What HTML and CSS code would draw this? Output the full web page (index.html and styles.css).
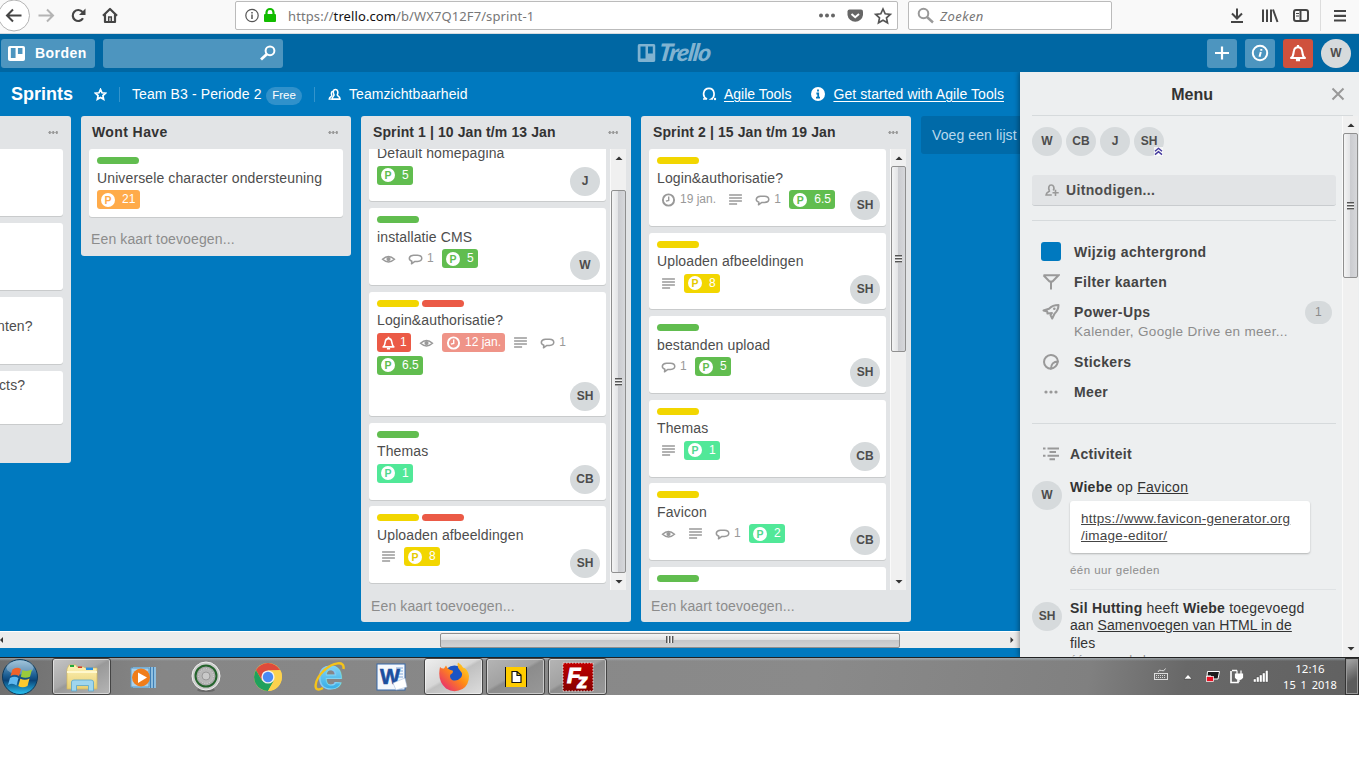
FILE: index.html
```html
<!DOCTYPE html>
<html lang="nl">
<head>
<meta charset="utf-8">
<title>Sprints | Trello</title>
<link rel="stylesheet" href="styles.css">
</head>
<body>
<svg class="defs" width="0" height="0" aria-hidden="true">
  <defs>
    <symbol id="eye" viewBox="0 0 14 14"><path d="M1 7.2Q7 1.6 13 7.2Q7 12.6 1 7.2Z" fill="none" stroke="currentColor" stroke-width="1.4"/><circle cx="7" cy="7.1" r="2.1" fill="currentColor"/></symbol>
    <symbol id="comment" viewBox="0 0 14 14"><path d="M3 11.8L3.400 9.200C-.3 8.200-.2 3.600 5 3.200H9C14.600 3.400 14.800 9.200 9 9.400H6.400Z" fill="none" stroke="currentColor" stroke-width="1.500" stroke-linejoin="round"/></symbol>
    <symbol id="desc" viewBox="0 0 14 14"><path d="M.6 2H13.4M.6 5H13.4M.6 8H13.4M.6 11H8.6" stroke="currentColor" stroke-width="1.700"/></symbol>
    <symbol id="clock" viewBox="0 0 14 14"><circle cx="7" cy="7" r="5.6" fill="none" stroke="currentColor" stroke-width="1.9"/><path d="M7.2 3.6V7.4L4.4 8.2" fill="none" stroke="currentColor" stroke-width="1.4"/></symbol>
    <symbol id="bell" viewBox="0 0 14 14"><path d="M1.6 10.9C3.6 9.8 3.3 7.6 3.8 5.4C4.2 3.4 5.3 2.6 7 2.6S9.800 3.400 10.200 5.400C10.700 7.600 10.400 9.800 12.400 10.900Z" fill="none" stroke="currentColor" stroke-width="1.6" stroke-linejoin="round"/><path d="M7 .8V2.500M5.400 12.600H8.600" stroke="currentColor" stroke-width="1.700"/></symbol>
    <symbol id="person" viewBox="0 0 14 14"><path d="M6.500 7.400C5 4.900 5.500 1.700 8 1.700S11.300 4.900 10 7.400C10 9 12.800 8.800 12.900 12H4.400C4.500 9 6.600 9 6.500 7.400Z" fill="none" stroke="currentColor" stroke-width="1.700"/><path d="M5.500 3.500C2.800 4 3.500 6.500 4.200 8C4 9.500 1.500 9 1.300 12H4" fill="none" stroke="currentColor" stroke-width="1.500"/></symbol>
    <symbol id="up" viewBox="0 0 10 6"><path d="M1.500 5L5 1.500L8.500 5Z" fill="#333"/></symbol>
    <symbol id="down" viewBox="0 0 10 6"><path d="M1.500 1L5 4.500L8.500 1Z" fill="#333"/></symbol>
    <symbol id="boards" viewBox="0 0 18 18"><path fill-rule="evenodd" fill="currentColor" d="M2 0H16Q18 0 18 2V16Q18 18 16 18H2Q0 18 0 16V2Q0 0 2 0ZM3 2.500V14.500H8V2.500ZM10.500 2.500V9.500H15.300V2.500Z"/></symbol>
    <linearGradient id="orb" x1="0" y1="0" x2="0" y2="1"><stop offset="0" stop-color="#7fb0cf"/><stop offset=".45" stop-color="#1d5f94"/><stop offset=".6" stop-color="#0b4478"/><stop offset="1" stop-color="#29c4f4"/></linearGradient>
    <linearGradient id="folder" x1="0" y1="0" x2="0" y2="1"><stop offset="0" stop-color="#fdf3b8"/><stop offset="1" stop-color="#e8cf73"/></linearGradient>
    <linearGradient id="fox" x1="1" y1="0" x2="0" y2="1"><stop offset="0" stop-color="#ffe226"/><stop offset=".45" stop-color="#ff8a16"/><stop offset="1" stop-color="#e31587"/></linearGradient>
    <linearGradient id="ie" x1="0" y1="0" x2="0" y2="1"><stop offset="0" stop-color="#b5ecff"/><stop offset="1" stop-color="#1a9fe0"/></linearGradient>
    <linearGradient id="red" x1="0" y1="0" x2="0" y2="1"><stop offset="0" stop-color="#c00000"/><stop offset="1" stop-color="#850000"/></linearGradient>
  </defs>
</svg>

<div class="screen">
  <div class="browser">
    <div class="nav">
      <svg class="nav-icons" width="125" height="34" viewBox="0 0 125 34">
        <circle cx="14" cy="15.500" r="15.500" fill="#fff" stroke="#b5b5b5"/>
        <path d="M21.500 15.500H7.500M13 9.500L7 15.500L13 21.500" fill="none" stroke="#454545" stroke-width="2"/>
        <path d="M38.500 15.500H52M47 9.500L53 15.500L47 21.500" fill="none" stroke="#b4b4b4" stroke-width="2"/>
        <path d="M83 18.300A5.500 5.500 0 1 1 82.500 12" fill="none" stroke="#454545" stroke-width="2.200"/><path d="M85.500 8.500V15H79Z" fill="#454545"/>
        <path d="M103 15.800L110 9L117 15.800M105 14V22H115V14" fill="none" stroke="#454545" stroke-width="2.200" stroke-linejoin="round"/><path d="M108.700 22V17H111.300V22" stroke="#454545" stroke-width="1.500" fill="none"/>
      </svg>
    </div>
    <div class="urlbar">
      <svg width="34" height="20" viewBox="0 0 34 20"><circle cx="8" cy="9.500" r="6.200" fill="none" stroke="#555" stroke-width="1.200"/><path d="M8 6V7.400M8 8.600V13" stroke="#555" stroke-width="1.500"/><rect x="20" y="8" width="12" height="8" rx="1" fill="#12bc00"/><path d="M22.500 9V6.500A3.500 3.500 0 0 1 29.500 6.500V9" fill="none" stroke="#12bc00" stroke-width="2.200"/></svg>
      <span class="url">https://<b>trello.com</b>/b/WX7Q12F7/sprint-1</span>
      <svg class="url-actions" width="80" height="24" viewBox="0 0 80 24"><g fill="#666"><circle cx="4" cy="11.500" r="2"/><circle cx="10" cy="11.500" r="2"/><circle cx="16" cy="11.500" r="2"/><path d="M32.500 5.500H44Q46 5.500 46 7.500V11A7.800 7.500 0 0 1 30.500 11V7.500Q30.500 5.500 32.500 5.500Z"/></g><path d="M34.500 10L38.200 13.200L42 10" fill="none" stroke="#fff" stroke-width="2"/><path d="M66 5L68.200 9.800L73.300 10.300L69.500 13.800L70.500 18.800L66 16.300L61.500 18.800L62.500 13.800L58.700 10.300L63.800 9.800Z" fill="none" stroke="#555" stroke-width="1.700"/></svg>
    </div>
    <div class="searchbar">
      <svg width="18" height="18" viewBox="0 0 18 18"><circle cx="6.500" cy="6.500" r="4.800" fill="none" stroke="#999" stroke-width="2"/><path d="M10 10L16 15.500" stroke="#999" stroke-width="2.400"/></svg>
      <span>Zoeken</span>
    </div>
    <svg class="tools" width="130" height="31" viewBox="0 0 130 31"><g fill="none" stroke="#454545" stroke-width="2"><path d="M8 8.500V18.500M3 13.500L8 18.500L13 13.500M2 22H14"/><path d="M34 9.500V22M38 9.500V22M42 9.500V22M44 9.500L48.500 22"/><rect x="65" y="10" width="14" height="11" rx="2"/><path d="M71.500 10V21"/><path d="M67 13.500H70M67 16H70" stroke-width="1"/><path d="M105 11H117M105 15.800H117M105 20.500H117" stroke-width="2.200"/></g><path d="M91.500 0V31" stroke="#ddd"/></svg>
  </div>

  <div class="topbar">
    <div class="btn boards"><svg width="17" height="15" preserveAspectRatio="none" viewBox="0 0 18 18"><use href="#boards"/></svg><span>Borden</span></div>
    <div class="btn find"><svg width="18" height="16" viewBox="0 0 18 16"><circle cx="11" cy="5.800" r="4.400" fill="none" stroke="#fff" stroke-width="2"/><path d="M8 9L2 14.500" stroke="#fff" stroke-width="2.800"/></svg></div>
    <div class="logo"><svg width="19" height="18" viewBox="0 0 18 18"><use href="#boards"/></svg><span>Trello</span></div>
    <div class="actions">
      <div class="btn sq"><svg width="16" height="16" viewBox="0 0 16 16"><path d="M8 1.500V14.500M1 8H15" stroke="#fff" stroke-width="2.200"/></svg></div>
      <div class="btn sq"><svg width="18" height="18" viewBox="0 0 18 18"><circle cx="9" cy="9" r="7.200" fill="none" stroke="#fff" stroke-width="2"/><path d="M10.300 5V6.800M9.800 8L8.500 12.800" stroke="#fff" stroke-width="2"/></svg></div>
      <div class="btn sq alert"><svg width="18" height="18"><use href="#bell"/></svg></div>
      <div class="avatar top">W</div>
    </div>
  </div>

  <div class="app">
    <div class="board">
      <div class="board-head">
        <h1>Sprints</h1>
        <svg class="star" width="13" height="13" viewBox="0 0 14 14"><path d="M7 1.500L8.600 5.100L12.500 5.500L9.600 8.200L10.400 12.200L7 10.200L3.600 12.200L4.400 8.200L1.500 5.500L5.400 5.100Z" fill="none" stroke="#fff" stroke-width="1.800"/></svg>
        <span class="team">Team B3 - Periode 2</span><span class="free">Free</span>
        <span class="vis"><svg width="13" height="13"><use href="#person"/></svg>Teamzichtbaarheid</span>
        <span class="right">
          <svg width="15" height="14" viewBox="0 0 15 14"><path d="M1 12H5C-.5 9.500 1.200 1.400 7 1.400S13.500 9.500 9.500 12H11" fill="none" stroke="#fff" stroke-width="1.700"/><circle cx="13" cy="12" r="1.200" fill="#fff"/></svg>
          <u class="agile">Agile Tools</u>
          <svg width="14" height="14" viewBox="0 0 14 14"><circle cx="7" cy="7" r="7" fill="#fff"/><path d="M7 2.500V4.600M5.400 6.500H7.200V10.500M5 10.600H9" stroke="#0079bf" stroke-width="1.800" fill="none"/></svg>
          <u class="start">Get started with Agile Tools</u>
        </span>
      </div>

      <div class="lists">
        <section class="list cut">
          <header><h2></h2><i class="dots"></i></header>
          <div class="card h68"></div>
          <div class="card h68"></div>
          <div class="card h68"><p class="frag low">nten?</p></div>
          <div class="card h53"><p class="frag">cts?</p></div>
        </section>

        <section class="list short">
          <header><h2 class="wide">Wont Have</h2><i class="dots"></i></header>
          <div class="card h68 full">
            <div class="labels"><i class="green"></i></div>
            <p>Universele character ondersteuning</p>
            <div class="badges"><span class="pill orange"><b>P</b>21</span></div>
          </div>
          <footer>Een kaart toevoegen...</footer>
        </section>

        <section class="list">
          <header><h2>Sprint 1 | 10 Jan t/m 13 Jan</h2><i class="dots"></i></header>
          <div class="body">
            <div class="cards scrolled">
              <div class="card">
                <div class="labels"><i class="green"></i></div>
                <p>Default homepagina</p>
                <div class="badges"><span class="pill green"><b>P</b>5</span></div>
                <div class="avatar">J</div>
              </div>
              <div class="card">
                <div class="labels"><i class="green"></i></div>
                <p>installatie CMS</p>
                <div class="badges"><span class="plain solo"><svg><use href="#eye"/></svg></span><span class="plain"><svg><use href="#comment"/></svg>1</span><span class="pill green"><b>P</b>5</span></div>
                <div class="avatar">W</div>
              </div>
              <div class="card tall">
                <div class="labels"><i class="yellow"></i><i class="red"></i></div>
                <p>Login&amp;authorisatie?</p>
                <div class="badges"><span class="plain red"><svg><use href="#bell"/></svg>1</span><span class="plain solo"><svg><use href="#eye"/></svg></span><span class="plain due"><svg><use href="#clock"/></svg>12 jan.</span><span class="plain solo"><svg><use href="#desc"/></svg></span><span class="plain"><svg><use href="#comment"/></svg>1</span><span class="pill green"><b>P</b>6.5</span></div>
                <div class="avatar">SH</div>
              </div>
              <div class="card">
                <div class="labels"><i class="green"></i></div>
                <p>Themas</p>
                <div class="badges"><span class="pill mint"><b>P</b>1</span></div>
                <div class="avatar">CB</div>
              </div>
              <div class="card">
                <div class="labels"><i class="yellow"></i><i class="red"></i></div>
                <p>Uploaden afbeeldingen</p>
                <div class="badges"><span class="plain solo"><svg><use href="#desc"/></svg></span><span class="pill yellow"><b>P</b>8</span></div>
                <div class="avatar">SH</div>
              </div>
            </div>
            <div class="vbar"><svg><use href="#up"/></svg><div class="thumb t1"><i></i></div><svg><use href="#down"/></svg></div>
          </div>
          <footer>Een kaart toevoegen...</footer>
        </section>

        <section class="list">
          <header><h2>Sprint 2 | 15 Jan t/m 19 Jan</h2><i class="dots"></i></header>
          <div class="body">
            <div class="cards">
              <div class="card">
                <div class="labels"><i class="yellow"></i></div>
                <p>Login&amp;authorisatie?</p>
                <div class="badges"><span class="plain"><svg><use href="#clock"/></svg>19 jan.</span><span class="plain solo"><svg><use href="#desc"/></svg></span><span class="plain"><svg><use href="#comment"/></svg>1</span><span class="pill green"><b>P</b>6.5</span></div>
                <div class="avatar">SH</div>
              </div>
              <div class="card">
                <div class="labels"><i class="yellow"></i></div>
                <p>Uploaden afbeeldingen</p>
                <div class="badges"><span class="plain solo"><svg><use href="#desc"/></svg></span><span class="pill yellow"><b>P</b>8</span></div>
                <div class="avatar">SH</div>
              </div>
              <div class="card">
                <div class="labels"><i class="green"></i></div>
                <p>bestanden upload</p>
                <div class="badges"><span class="plain"><svg><use href="#comment"/></svg>1</span><span class="pill green"><b>P</b>5</span></div>
                <div class="avatar">SH</div>
              </div>
              <div class="card">
                <div class="labels"><i class="yellow"></i></div>
                <p>Themas</p>
                <div class="badges"><span class="plain solo"><svg><use href="#desc"/></svg></span><span class="pill mint"><b>P</b>1</span></div>
                <div class="avatar">CB</div>
              </div>
              <div class="card">
                <div class="labels"><i class="yellow"></i></div>
                <p>Favicon</p>
                <div class="badges"><span class="plain solo"><svg><use href="#eye"/></svg></span><span class="plain solo"><svg><use href="#desc"/></svg></span><span class="plain"><svg><use href="#comment"/></svg>1</span><span class="pill mint"><b>P</b>2</span></div>
                <div class="avatar">CB</div>
              </div>
              <div class="card">
                <div class="labels"><i class="green"></i></div>
              </div>
            </div>
            <div class="vbar"><svg><use href="#up"/></svg><div class="thumb t2"><i></i></div><svg><use href="#down"/></svg></div>
          </div>
          <footer>Een kaart toevoegen...</footer>
        </section>

        <div class="add-list">Voeg een lijst</div>
      </div>

      <div class="hbar">
        <svg width="4" height="8" viewBox="0 0 4 8"><path d="M3 1V7L0 4Z" fill="#333"/></svg>
        <div class="hthumb"><i></i></div>
        <svg width="4" height="8" viewBox="0 0 4 8"><path d="M.5 1V7L3.500 4Z" fill="#333"/></svg>
      </div>
    </div>

    <aside class="menu">
      <div class="menu-head"><h3>Menu</h3><svg width="14" height="14" viewBox="0 0 14 14"><path d="M1.500 1.500L12.500 12.500M12.500 1.500L1.500 12.500" stroke="#999" stroke-width="2"/></svg></div>
      <div class="menu-body">
        <div class="menu-content">
          <div class="members">
            <div class="avatar">W</div><div class="avatar">CB</div><div class="avatar">J</div>
            <div class="avatar">SH<svg class="admin" width="9" height="9" viewBox="0 0 9 9"><rect width="9" height="9" fill="#fff" opacity=".7"/><path d="M1 4.300L4.500 1.300L8 4.300M1 7.600L4.500 4.600L8 7.600" fill="none" stroke="#42389d" stroke-width="1.400"/></svg></div>
          </div>
          <div class="invite"><svg width="14" height="14" viewBox="0 0 14 14"><path d="M4.500 8C2.900 5 3.800 2 6.200 2S9.800 5 8.300 7.500M4.500 8C4.500 9 1.300 8.800 1.100 12H6.800" fill="none" stroke="#999" stroke-width="1.700"/><path d="M10.500 6.800V13M7.500 9.800H13.700" stroke="#999" stroke-width="1.600"/></svg>Uitnodigen...</div>
          <ul class="items">
            <li><i class="swatch"></i>Wijzig achtergrond</li>
            <li><svg width="18" height="16" viewBox="0 0 18 16"><path d="M1.500 1.300H16.500L10.500 7.500H7.500L1.500 1.300M9 7V15.500" fill="none" stroke="#999" stroke-width="2"/></svg>Filter kaarten</li>
            <li><svg width="18" height="16" viewBox="0 0 18 16"><path d="M1.500 6.500L7 4.700C10 1.600 12.500 1 16.500 1C16.500 4.500 15.500 7 12.500 9.700L10.200 14.500L8.500 11L10 9L5.500 9.500L5.200 7.500Z" fill="none" stroke="#999" stroke-width="2" stroke-linejoin="round"/><circle cx="12.300" cy="4.800" r="1.300" fill="#999"/></svg>Power-Ups<em>1</em></li>
            <li class="sub">Kalender, Google Drive en meer...</li>
            <li class="stick"><svg width="18" height="16" viewBox="0 0 18 16"><path d="M9 14.700A7 6.800 0 1 1 16 7.500Q14.500 13.800 9 14.700C9 10.500 11.500 7.500 16 7.500" fill="none" stroke="#999" stroke-width="2"/></svg>Stickers</li>
            <li><svg width="18" height="16" viewBox="0 0 18 16"><g fill="#999"><circle cx="4" cy="8" r="1.600"/><circle cx="9" cy="8" r="1.600"/><circle cx="14" cy="8" r="1.600"/></g></svg>Meer</li>
          </ul>
          <h4><svg width="18" height="16" viewBox="0 0 18 16"><path d="M5.500 2.500H17M7.500 6H14M5.500 9.700H17M7.500 13.300H13M1 2.500H3.500M1 9.700H3.500" stroke="#999" stroke-width="2"/></svg>Activiteit</h4>
          <div class="entry first">
            <div class="avatar">W</div>
            <div class="what">
              <div class="line op"><b>Wiebe</b> op <u>Favicon</u></div>
              <div class="bubble"><u>https://www.favicon-generator.org<br>/image-editor/</u></div>
              <div class="time">één uur geleden</div>
            </div>
          </div>
          <div class="entry second">
            <div class="avatar">SH</div>
            <div class="what">
              <div class="line"><span class="sil"><b>Sil Hutting</b> heeft <b>Wiebe</b> toegevoegd</span><br>aan <u>Samenvoegen van HTML in de</u><br>files</div>
              <div class="time">één uur geleden</div>
            </div>
          </div>
        </div>
        <div class="vbar"><svg><use href="#up"/></svg><div class="thumb t3"><i></i></div><svg><use href="#down"/></svg></div>
      </div>
    </aside>
  </div>

  <div class="taskbar">
    <div class="orb"><svg width="40" height="38" viewBox="0 0 40 38"><circle cx="20" cy="19" r="17.500" fill="url(#orb)" stroke="#0d3a5c"/><ellipse cx="20" cy="9.500" rx="13.500" ry="7" fill="#fff" opacity=".28"/><path d="M12.500 11.500Q16.500 8.500 21 11L19 18Q15 15.500 10.500 18Z" fill="#f0622a"/><path d="M22.500 12Q27 14.200 32 11.500L30 18.700Q25.500 21 20.800 18.700Z" fill="#9acb3b"/><path d="M10 20Q14.500 17.500 18.500 20L16.500 27.500Q12.500 24.500 8 27Z" fill="#5fb8ef"/><path d="M20.300 20.700Q25 23 29.500 20.600L27.500 28Q22.500 30.500 18.300 28Z" fill="#fdc92e"/></svg></div>
    <div class="task open light"><svg width="34" height="30" viewBox="0 0 34 30"><path d="M2 7L4 3H11L12 5H19L20 6H32V27H2Z" fill="url(#folder)" stroke="#d5b95c" stroke-width=".7"/><path d="M5 3H9V5H5Z" fill="#20a83a"/><path d="M13 4.500H17V6H13Z" fill="#d43a2a"/><path d="M21 5.500H28V8H21Z" fill="#2a8fe0"/><path d="M2 10H32" stroke="#fff8cd" stroke-width="2"/><path d="M6.500 29V20Q6.500 18 9 18H26Q28.500 18 28.500 20V29H23.500V23.500H11.500V29Z" fill="#9fd6ee" stroke="#5ba6ca" stroke-width=".8"/></svg></div>
    <div class="task"><svg width="30" height="26" viewBox="0 0 30 26"><path d="M4 3H27V24H4Z" fill="#8fbfe0"/><path d="M21.500 3V24M24.500 3V24" stroke="#3f7fb5"/><path d="M2 4H20V23H2Z" fill="#acd1ea" stroke="#5d9dca"/><circle cx="12" cy="13.500" r="9" fill="#f07d1a"/><path d="M9 8.500L18 13.500L9 19Z" fill="#fff"/></svg></div>
    <div class="task"><svg width="32" height="32" viewBox="0 0 32 32"><ellipse cx="16" cy="29" rx="9" ry="2" fill="#555" opacity=".6"/><circle cx="16" cy="15" r="14" fill="#ccc" stroke="#eee"/><circle cx="16" cy="15" r="10.500" fill="#a9a9a9" stroke="#25642d" stroke-width="2"/><circle cx="16" cy="15" r="7.500" fill="#b7b7b7" stroke="#ddd" stroke-dasharray="1 1.500"/><circle cx="16" cy="15" r="4" fill="#c9c9c9" stroke="#999"/></svg></div>
    <div class="task"><svg width="30" height="28" viewBox="0 0 30 28"><circle cx="15" cy="14" r="14" fill="#fdd24d"/><path d="M2.900 7A14 14 0 0 1 27.100 7L15 7.500L9 17.500Z" fill="#de4b3c"/><path d="M2.900 7A14 14 0 0 0 15 28L21 17.500H9Z" fill="#1fa15d"/><path d="M15 7.500H27.500Q30.500 14 27 21Q22.500 28 15 28L21 17.500Z" fill="#fdd24d"/><circle cx="15" cy="14" r="6.600" fill="#f1f1f1"/><circle cx="15" cy="14" r="5.200" fill="#4a8af4"/></svg></div>
    <div class="task"><svg width="34" height="32" viewBox="0 0 34 32"><text x="5" y="28" font-family="Liberation Sans" font-weight="bold" font-size="43" fill="url(#ie)" stroke="#7fd4f5" stroke-width="1" textLength="25" lengthAdjust="spacingAndGlyphs">e</text><path d="M10 27C-1 33 1 19 11 9.500C20 1.500 32 -1 30.500 8" fill="none" stroke="#f5c31a" stroke-width="2.400"/></svg></div>
    <div class="task"><svg width="32" height="30" viewBox="0 0 32 30"><rect x="1" y="2" width="28" height="26" fill="#f4f8fd" stroke="#3769aa"/><path d="M20 6H27M22 9H27M22 12H27M22 15H27" stroke="#80a6d8"/><text x="4" y="22" font-family="Liberation Sans" font-weight="bold" font-size="22" fill="#1c4f9f" stroke="#1c4f9f" stroke-width=".6" textLength="20" lengthAdjust="spacingAndGlyphs">W</text><path d="M17 21L29 16L31 25L20 28Z" fill="#fff" stroke="#9cb5d6" stroke-width=".5"/></svg></div>
    <div class="task open bright"><svg width="32" height="30" viewBox="0 0 32 30"><circle cx="16.500" cy="14" r="10.500" fill="#1a54c4"/><path d="M2 5Q4 7 6 6.500L8 3.500Q10 8 14.500 8.500Q16 10.500 12.500 12.500Q11 15.500 14 18Q19 20 23 15.500Q25.500 12 22 8.500Q18.500 5 20 .5Q24 3 25 5.500Q30 7 31 14Q31 23 24.500 27Q16 31.500 8 26.500Q-1 19 2 5Z" fill="url(#fox)"/></svg></div>
    <div class="task open"><svg width="22" height="20" viewBox="0 0 22 20"><rect width="22" height="20" fill="#fc0"/><path d="M.5 0V20M21.500 0V20" stroke="#111"/><path d="M7 4.500H12L16 8V15.500H7ZM12 4.500V8.500H16" fill="#fff" stroke="#111" stroke-width="1.200"/></svg></div>
    <div class="task open"><svg width="32" height="30" viewBox="0 0 32 30"><rect x="1" y="1" width="30" height="28" fill="url(#red)" stroke="#f2d0d0" stroke-width="1" stroke-dasharray="1.500 1.500"/><text x="5" y="21" font-family="Liberation Sans" font-style="italic" font-weight="bold" font-size="22" fill="#fff" stroke="#fff">F</text><text x="15" y="26" font-family="Liberation Sans" font-style="italic" font-weight="bold" font-size="21" fill="#fff" stroke="#fff">z</text></svg></div>
    <svg class="tray" width="124" height="24" viewBox="0 0 124 24">
      <g stroke="#ddd" fill="none"><rect x="2.500" y="8.500" width="13" height="6"/><path d="M4 10.500H14M4 12.500H14" stroke-dasharray="1 1"/><path d="M6 7Q7 4 9.500 5.500T13.500 3.500"/></g>
      <path d="M32 14L36 9.500L40 14Z" fill="#fff" stroke="#333" stroke-width=".5"/>
      <path d="M55.500 6.500H67.500L66 14H59V11H55Z" fill="#1c1c1c" stroke="#fff"/><rect x="54.500" y="11.500" width="7" height="5" fill="#e81123" stroke="#fff" stroke-width=".7"/>
      <path d="M80 5.500H85M79 6V17.500H86V15" fill="none" stroke="#fff" stroke-width="1.600"/><path d="M83.500 9H90.500V12.500Q87 16.500 83.500 12.500ZM85 9V5.500M89 9V5.500M87 14V17" fill="#fff" stroke="#fff" stroke-width="1.200"/>
      <g fill="#fff" stroke="#333" stroke-width=".3"><rect x="101.500" y="14" width="2.500" height="3"/><rect x="104.500" y="12" width="2.500" height="5"/><rect x="107.500" y="10" width="2.500" height="7"/><rect x="110.500" y="8" width="2.500" height="9"/><rect x="113.500" y="5.500" width="2.500" height="11.500"/></g>
    </svg>
    <div class="when"><span>12:16</span><span class="date">15 1 2018</span></div>
    <div class="peek"></div>
  </div>
</div>
</body>
</html>
```
FILE: styles.css
```css
* { box-sizing: border-box; }
body { margin: 0; background: #fff; font: 14px "Liberation Sans", Arial, sans-serif; color: #4d4d4d; overflow: hidden; }
h1, h2, h3, h4, p, ul { margin: 0; padding: 0; }
svg { display: block; flex: none; }
.defs { position: absolute; }
.screen { width: 1359px; height: 695px; display: flex; flex-direction: column; overflow: hidden; }

/* Browser toolbar */
.browser { flex: none; height: 34px; background: #f9f9f9; border-bottom: 1px solid #d5dbdf; display: flex; align-items: flex-start; overflow: hidden; }
.nav { width: 235px; }
.urlbar { width: 663px; height: 29px; margin-top: 1px; border: 1px solid #bbb; border-radius: 2px; background: #fff; display: flex; align-items: center; padding-left: 8px; }
.url { margin-left: 10px; flex: 1; font: 13px "Noto Sans", sans-serif; color: #777; letter-spacing: .1px; white-space: nowrap; }
.url b { font-weight: 400; color: #111; }
.searchbar { width: 204px; height: 29px; margin: 1px 0 0 10px; border: 1px solid #bbb; border-radius: 2px; background: #fff; display: flex; align-items: center; padding-left: 8px; gap: 5px; font: italic 13px "Noto Sans", sans-serif; letter-spacing: .5px; color: #777; }
.tools { margin-left: 117px; }

/* Trello header */
.topbar { flex: none; height: 38px; background: #0067a3; display: flex; align-items: center; padding-left: 1px; }
.btn { height: 29px; border-radius: 3px; background: #4d95bf; color: #fff; display: flex; align-items: center; }
.boards { width: 94px; padding-left: 7px; gap: 10px; font-weight: 700; letter-spacing: .45px; }
.find { width: 180px; margin-left: 8px; justify-content: flex-end; padding-right: 6px; }
.logo { margin-left: 354px; width: 80px; height: 22px; display: flex; align-items: center; gap: 3px; color: #80b3d1; }
.logo span { font: italic 900 24px/22px Lato, sans-serif; letter-spacing: -1px; transform: scaleX(1.03) skewX(-8deg); transform-origin: left; margin-top: -2px; }
.actions { margin-left: auto; display: flex; gap: 8px; padding-right: 8px; }
.sq { width: 30px; justify-content: center; }
.alert { background: #cf513d; }
.avatar { width: 30px; height: 29px; border-radius: 50%; background: #d6dadc; color: #4d4d4d; font-weight: 700; font-size: 12px; line-height: 29px; text-align: center; flex: none; }

.app { flex: 1; display: flex; min-height: 0; }
.board { width: 1020px; background: #0079bf; display: flex; flex-direction: column; overflow: hidden; }
.board-head { height: 44px; flex: none; display: flex; align-items: center; padding: 0 16px 0 11px; color: #fff; white-space: nowrap; }
.board-head h1 { font-size: 18px; width: 83px; padding-top: 1px; }
.team { margin-left: 12px; border-left: 1px solid #3394cc; padding-left: 12px; line-height: 15px; width: 148px; letter-spacing: .1px; }
.star { margin-top: 1px; }
.free { width: 36px; height: 18px; margin-top: 3px; margin-left: -1px; border-radius: 9px; background: #3091cb; font-size: 11.5px; line-height: 17px; text-align: center; }
.vis { display: flex; align-items: center; gap: 8px; margin-left: 12px; border-left: 1px solid #3394cc; padding-left: 13px; height: 15px; letter-spacing: .06px; }
.right { margin-left: auto; display: flex; align-items: center; }
.right u { margin-left: 7px; text-underline-offset: 2px; }
.agile { margin-right: 20px; }
.start { letter-spacing: .07px; }
.right u.start { margin-left: 8px; }

/* Lists */
.lists { height: 515px; flex: none; display: flex; align-items: flex-start; gap: 10px; }
.list { width: 270px; height: 506px; flex: none; border-radius: 3px; background: #e2e4e6; overflow: hidden; }
.list header { height: 33px; display: flex; align-items: center; padding: 0 13px 0 12px; justify-content: space-between; }
.list h2 { font-size: 14px; color: #333; letter-spacing: .1px; white-space: nowrap; margin-top: -2px; }
.list h2.wide { letter-spacing: .4px; margin-left: -1px; }
.dots { width: 10px; background: radial-gradient(circle, #999 1.200px, transparent 1.600px) 0 0 / 3.500px 3px; height: 3px; }
.list.cut { width: 71px; height: 347px; border-radius: 0 3px 3px 0; }
.list.short { height: 140px; }
.card { position: relative; height: 76.800px; margin: 0 0 6.800px; padding: 8px; border-radius: 3px; background: #fff; box-shadow: 0 1px 0 #c9cbcc; width: 237px; }
.card.h68 { height: 67.200px; width: auto; }
.card.full { margin: 0 8px; height: 68px; }
.card.h53 { height: 53px; width: auto; }
.cut .card { margin-right: 8px; padding: 5px 0; border-radius: 0 3px 3px 0; }
.card.tall { height: 124.200px; }
.card p { font-size: 14px; line-height: 18px; letter-spacing: .12px; white-space: nowrap; }
.card p.frag { margin-left: -1px; }
.card p.low { padding-top: 15px; margin-left: -3px; }
.labels { display: flex; gap: 3px; height: 7px; margin-bottom: 4.500px; }
.labels i { width: 42px; border-radius: 4px; }
.green { background: #61bd4f; }
.yellow { background: #f2d600; }
.red { background: #eb5a46; }
.orange { background: #ffab4a; }
.mint { background: #51e898; }
.badges { display: flex; flex-wrap: wrap; gap: 4px; margin-top: 3.500px; width: 221px; font-size: 12px; line-height: 19px; }
.badges span { height: 19px; padding-right: 4.300px; border-radius: 3px; display: flex; align-items: center; white-space: nowrap; }
.plain { color: #999; }
.plain svg { width: 23px; height: 14px; margin-top: 1px; }
.badges .solo { width: 23px; padding: 0; }
.badges .plain.red, .badges .due { color: #fff; }
.due { background: #ef9488; }
.pill { color: #fff; }
.pill b { width: 14px; height: 14px; margin: 0 7px 0 4px; border-radius: 50%; background: #fff; font-size: 10.500px; line-height: 14px; text-align: center; }
.pill.green b { color: #61bd4f; }
.pill.orange b { color: #ffab4a; }
.pill.mint b { color: #51d890; }
.pill.yellow b { color: #e5ca00; }
.card .avatar { position: absolute; right: 6px; bottom: 5.500px; }
.list footer { height: 32px; padding-left: 10px; line-height: 33px; color: #8c8c8c; letter-spacing: .13px; }
.short footer { margin-top: 6px; }
.body { height: 441px; display: flex; padding: 0 5px 0 8px; }
.cards { width: 237px; height: 441px; overflow: hidden; }
.scrolled { display: flex; flex-direction: column; justify-content: flex-end; }
.scrolled .card { flex: none; }

/* Scrollbars */
.vbar { width: 16px; margin-left: auto; background: #f0f0f0; border-left: 1px solid #fafafa; display: flex; flex-direction: column; align-items: center; }
.vbar > svg { width: 10px; height: 6px; margin: 6px 0 5px; }
.vbar > svg:last-child { margin: auto 0 5px; }
.thumb { width: 15px; border: 1px solid #8f8f8f; border-radius: 2px; background: linear-gradient(90deg, #f4f4f4, #e3e4e6 45%, #cbccd0 50%, #d6d7da); display: flex; align-items: center; justify-content: center; }
.thumb i { width: 7px; height: 8px; background: repeating-linear-gradient(#555 0 1px, #aaa 1px 2px, #f2f2f2 2px 3px); }
.t1 { height: 383px; margin-top: 24px; }
.t2 { height: 186px; }
.t3 { height: 145px; }
.add-list { width: 270px; height: 38px; flex: none; border-radius: 3px; background: #006aa8; color: #b8d8ec; padding-left: 11px; line-height: 38px; letter-spacing: .1px; }
.hbar { height: 17px; flex: none; background: #ececec; display: flex; align-items: center; padding-right: 6px; border-top: 1px solid #fff; }
.hthumb { width: 460px; height: 15px; margin-left: 436px; margin-right: auto; border: 1px solid #8f8f8f; border-radius: 2px; background: linear-gradient(#f4f4f4, #e3e3e3 45%, #c6c7c9 50%, #d3d3d4); display: flex; align-items: center; justify-content: center; }
.hthumb i { width: 8px; height: 7px; margin-top: -2px; background: repeating-linear-gradient(90deg, #555 0 1px, #aaa 1px 2px, #f2f2f2 2px 3px); }

/* Menu */
.menu { position: relative; width: 339px; background: #edeff0; display: flex; flex-direction: column; box-shadow: -1px 0 5px rgba(0, 0, 0, .4); clip-path: inset(0 0 0 -8px); }
.menu-head { height: 44px; flex: none; margin: 0 6px 0 12px; border-bottom: 1px solid #d6dadc; display: flex; align-items: center; justify-content: flex-end; padding-right: 8px; }
.menu-head h3 { font-size: 16px; color: #333; margin-right: 118px; padding-top: 2px; }
.menu-body { height: 541px; display: flex; padding-right: 1px; }
.menu-content { width: 316px; padding: 11px 0 0 12px; overflow: hidden; }
.members { display: flex; gap: 4px; }
.members .avatar { position: relative; }
.admin { position: absolute; right: 1px; bottom: 0; }
.invite { height: 31px; margin-top: 19px; padding-left: 13px; display: flex; align-items: center; gap: 7px; border-radius: 3px; background: #e2e4e6; border-bottom: 1px solid #c9cccf; color: #4d4d4d; font-weight: 700; letter-spacing: .35px; }
.items { list-style: none; margin-top: 14px; padding-top: 16px; height: 204px; border-top: 1px solid #d6dadc; border-bottom: 1px solid #d6dadc; }
.items li { display: flex; align-items: center; height: 30.200px; padding-left: 10px; font-weight: 700; letter-spacing: .37px; color: #444; }
.items svg { margin-right: 14px; }
.swatch { width: 20px; height: 19px; border-radius: 3px; background: #0079bf; margin: 0 13px 1px -1px; }
.items em { margin-left: auto; margin-right: 4px; width: 27px; height: 23px; border-radius: 12px; background: #d6dadc; color: #8c8c8c; font: 12px/23px "Liberation Sans", sans-serif; text-align: center; }
.items li.sub { height: 8px; padding-left: 42px; font-weight: 400; font-size: 13.500px; color: #8c8c8c; letter-spacing: .32px; white-space: nowrap; }
.items li.stick { margin-top: 11px; }
h4 { display: flex; align-items: center; height: 16px; margin-top: 22px; padding-left: 10px; gap: 10px; font-size: 14px; color: #444; letter-spacing: .28px; }
.entry { display: flex; gap: 8px; color: #333; }
.first { margin-top: 17px; }
.entry .avatar { margin-top: 2px; }
.line { line-height: 17.500px; white-space: nowrap; letter-spacing: .07px; }
.line.op { letter-spacing: .3px; }
.what { flex: 1; }
.bubble { width: 240px; height: 52px; margin-top: 4px; padding: 9px 11px; border-radius: 3px; background: #fff; box-shadow: 0 1px 2px rgba(0, 0, 0, .25); font-size: 13.500px; line-height: 17px; letter-spacing: .27px; white-space: nowrap; color: #444; }
.time { margin-top: 10px; font-size: 11.500px; line-height: 14px; color: #8c8c8c; letter-spacing: .45px; }
.first .what { border-bottom: 1px solid #dfe2e4; padding-bottom: 12px; }
.second { margin-top: 10px; }
.second .time { margin-top: 0; }
.sil { letter-spacing: .22px; }

/* Windows taskbar */
.taskbar { flex: none; height: 38px; border-top: 1px solid #222; background: linear-gradient(rgba(190, 205, 215, .5) 0, transparent 3px), linear-gradient(100deg, #6e6e6e 0, #868686 12%, #8a8a8a 60%, #808080 80%, #686868 87%, #616161 100%); display: flex; align-items: center; }
.orb { width: 52px; }
.task { width: 59px; height: 37px; margin-right: 3px; display: flex; align-items: center; justify-content: center; }
.open { border: 1px solid #444; border-radius: 3px; box-shadow: inset 0 0 0 1px rgba(255, 255, 255, .5); background: linear-gradient(150deg, #b5b5b5, #a2a2a2 45%, #8c8c8c 50%, #989898); }
.light { background: linear-gradient(150deg, #c5c5c5, #a8a8a8 45%, #999 50%, #b5b5b5); }
.bright { background: linear-gradient(150deg, #eee, #d6d6d6 45%, #c0c0c0 50%, #ddd); }
.tray { margin-left: 542px; }
.when { width: 60px; margin-left: 4px; display: flex; flex-direction: column; align-items: center; font: 11.500px/16px "Noto Sans", sans-serif; color: #fff; }
.date { font-size: 11px; word-spacing: 2px; }
.peek { width: 14px; height: 37px; margin-left: auto; border: 1px solid #333; box-shadow: inset 0 0 0 1px #999; background: linear-gradient(150deg, #aaa, #5c5c5c 60%); }
```
